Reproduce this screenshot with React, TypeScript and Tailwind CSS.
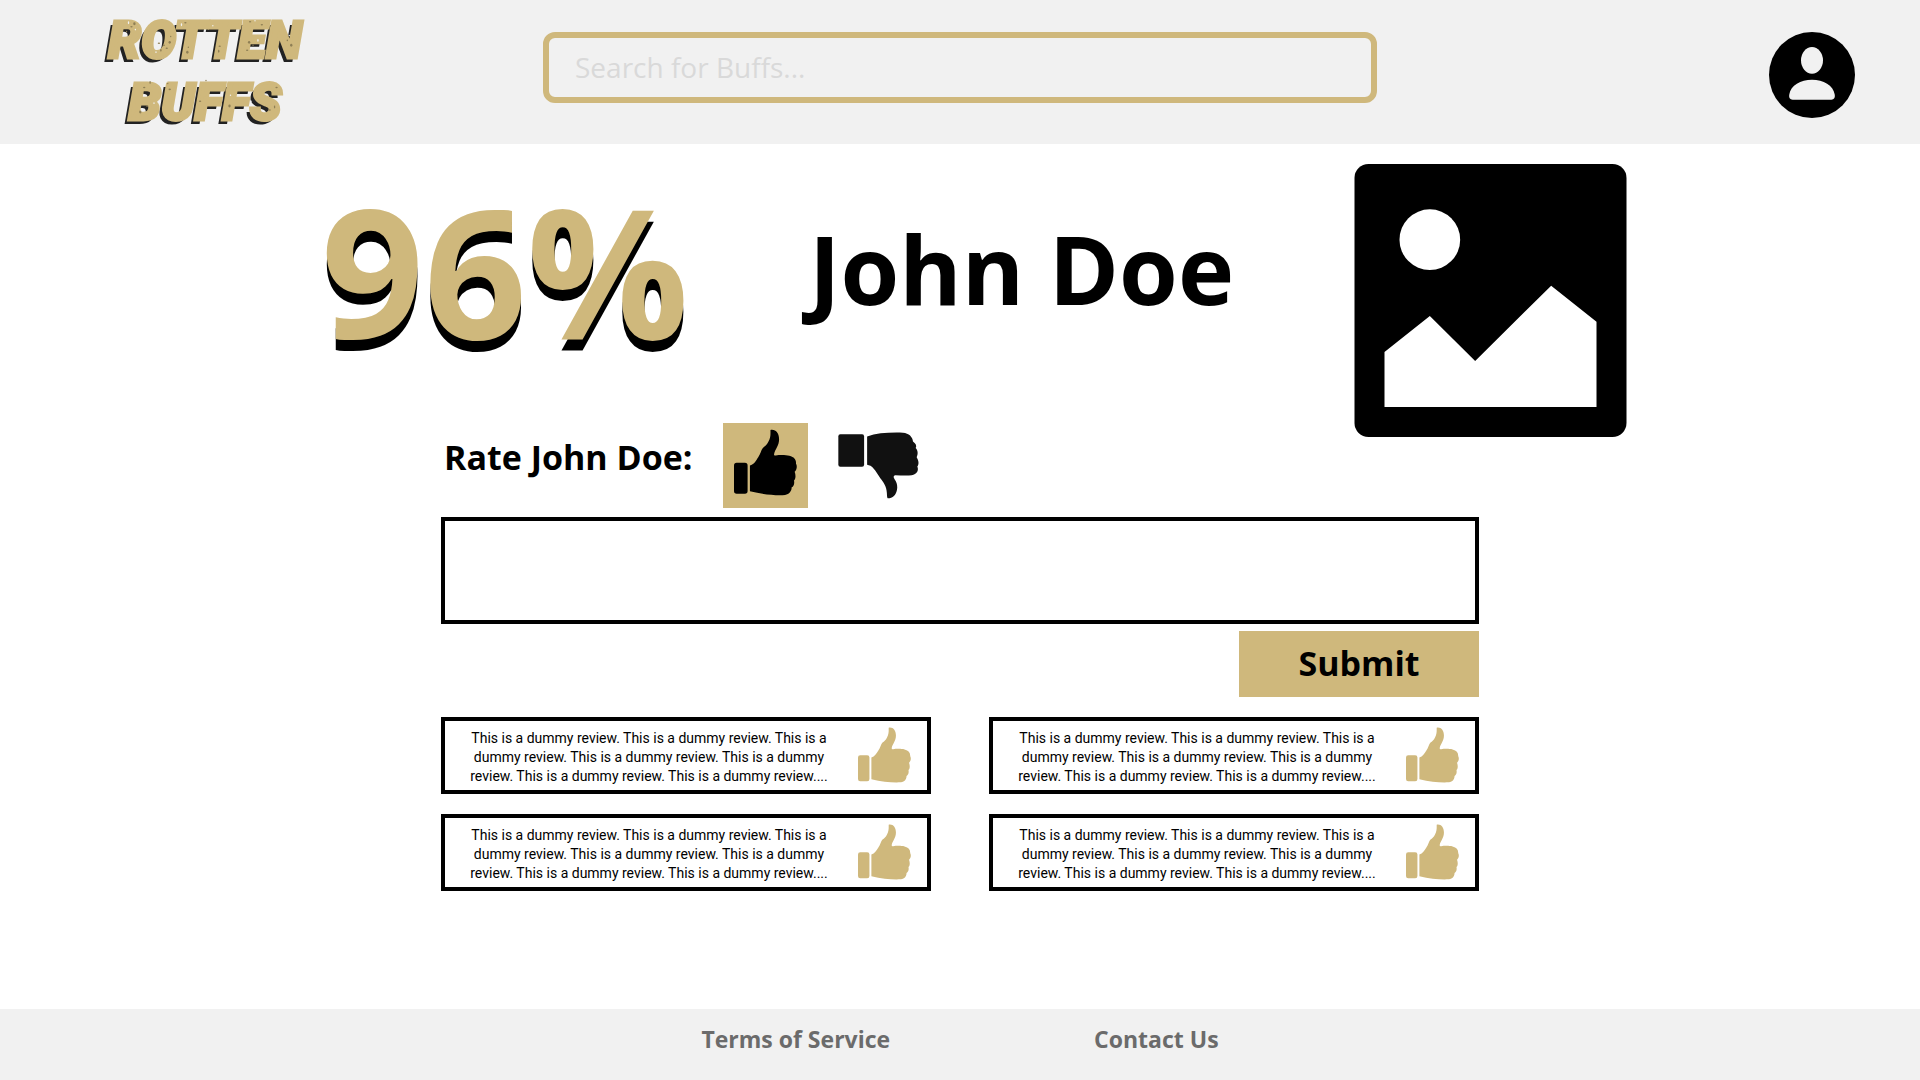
import React from "react";

const REVIEW =
  "This is a dummy review. This is a dummy review. This is a dummy review. This is a dummy review. This is a dummy review. This is a dummy review. This is a dummy review....";

function ThumbUp({ className }: { className: string }) {
  return (
    <svg viewBox="912 58 190 200" className={className} fill="currentColor" aria-hidden="true">
      <rect x="912" y="159" width="41" height="93" rx="8" />
      <path d="M960 167C972 164 978 153 985 142C992 132 993 122 999 114C1006 108 1012 105 1016 95C1023 82 1022 74 1022 60C1038 57 1048 70 1048 88C1048 108 1036 118 1033 132C1032 136 1034 138 1038 137C1050 135 1068 135 1079 138C1094 142 1100 150 1099 162C1103 168 1102 180 1095 186C1099 197 1098 208 1093 212C1095 222 1092 230 1086 233C1086 244 1079 254 1066 256C1036 258 1000 254 960 245Z" />
    </svg>
  );
}

function ThumbDown({ className }: { className: string }) {
  return (
    <svg viewBox="1224 66 242 200" className={className} fill="currentColor" aria-hidden="true">
      <rect x="1225" y="73" width="77" height="97" rx="6" />
      <path d="M1311 79C1340 69 1375 67 1418 68C1436 69 1447 81 1448 94C1457 101 1460 107 1456 114C1464 122 1463 134 1459 141C1466 152 1466 163 1461 169C1466 180 1460 193 1444 195C1428 197 1410 195 1395 195C1389 196 1389 201 1393 207C1399 216 1401 222 1401 232C1400 250 1392 262 1378 264C1370 265 1371 262 1370 248C1369 228 1359 215 1351 205C1341 189 1329 171 1321 167L1311 164Z" />
    </svg>
  );
}

const SPECKS = [
  [24, 10], [27, 14], [22, 19], [30, 11], [31, 17], [60, 33], [57, 38], [63, 36], [52, 40], [66, 30], [67, 24], [55, 31],
  [78, 12], [82, 10], [85, 35], [84, 40], [110, 13], [117, 34], [116, 39], [148, 9], [153, 8], [147, 30], [151, 33], [145, 38],
  [156, 28], [160, 12], [186, 28], [190, 33], [188, 23], [40, 76], [46, 71], [43, 95], [50, 92],
  [36, 101], [64, 72], [66, 78], [63, 70], [97, 90], [103, 69], [127, 95], [128, 84], [168, 99], [173, 96],
  [175, 76], [149, 90],
];

function Logo() {
  return (
    <a
      href="#"
      className="relative flex w-[200px] flex-col items-center font-['Roboto',sans-serif] text-[52px] leading-[62px] font-black text-[#cfb87c] italic [-webkit-text-stroke:3px_#cfb87c] [text-shadow:-4px_4px_0_#222]"
    >
      <span>ROTTEN</span>
      <span>BUFFS</span>
      <svg viewBox="0 0 204 124" className="pointer-events-none absolute inset-0" aria-hidden="true">
        {SPECKS.map(([x, y], i) => (
          <ellipse key={i} cx={x} cy={y + 3} rx={i % 2 ? 1.2 : 0.7} ry={i % 3 ? 0.8 : 1.5} fill={i % 4 ? "#8f7f55" : "#f1f1f1"} />
        ))}
      </svg>
    </a>
  );
}

function Avatar() {
  return (
    <button type="button" aria-label="Account">
      <svg viewBox="0 0 258 258" className="size-[86px]" aria-hidden="true">
        <circle cx="129" cy="129" r="129" fill="#000" />
        <ellipse cx="129" cy="85" rx="33" ry="40" fill="#f1f1f1" />
        <path d="M61 187C65 160 95 143 129 143S193 160 197 187C199 198 195 203 187 203H71C63 203 59 198 61 187Z" fill="#f1f1f1" />
      </svg>
    </button>
  );
}

function Portrait() {
  return (
    <svg viewBox="0 0 816 819" className="size-[273px]" role="img" aria-label="Portrait of John Doe">
      <rect width="816" height="819" rx="42" fill="#000" />
      <circle cx="226" cy="227" r="91" fill="#fff" />
      <path d="M90 564L226 456L362 591L590 365L726 473V729H90Z" fill="#fff" />
    </svg>
  );
}

function Review() {
  return (
    <article className="flex h-[77px] items-center justify-between border-4 border-black pr-4 pl-[14px]">
      <p className="w-[380px] pt-1 text-center font-['Roboto',sans-serif] text-[14px] leading-[19px] text-black">{REVIEW}</p>
      <ThumbUp className="mb-0.5 h-[56px] w-[53px] shrink-0 text-[#cfb87c]" />
    </article>
  );
}

export default function App() {
  return (
    <div className="flex min-h-screen flex-col bg-white font-['Open_Sans',sans-serif] text-black">
      <header className="grid h-36 grid-cols-[1fr_834px_1fr] bg-[#f1f1f1] px-[65px]">
        <div className="flex items-center pl-10">
          <Logo />
        </div>
        <input
          type="search"
          aria-label="Search for Buffs"
          placeholder="Search for Buffs..."
          className="mt-8 h-[71px] w-full rounded-xl border-6 border-[#cfb87c] bg-transparent px-[26px] pb-0.5 text-[28px] outline-none placeholder:text-[#d9d9d9]"
        />
        <div className="mt-8 flex items-start justify-end">
          <Avatar />
        </div>
      </header>

      <main className="flex flex-1 flex-col items-center">
        <section className="mt-5 flex w-full max-w-[1334px] items-start justify-between pl-[28px]">
          <p className="mt-1.5 text-[180px] leading-[200px] font-bold text-[#cfb87c] [text-shadow:0_11px_0_#000]">96%</p>
          <h1 className="mt-14 text-[95px] leading-[97px] font-bold">John Doe</h1>
          <Portrait />
        </section>

        <form className="-mt-[14px] w-full max-w-[1038px]" onSubmit={(e) => e.preventDefault()}>
          <div className="flex h-[85px] items-center">
            <label htmlFor="review" className="w-[282px] pb-4 pl-[3px] text-[34px] font-bold">
              Rate John Doe:
            </label>
            <button type="button" aria-label="Thumbs up" className="flex size-[85px] items-center justify-center bg-[#cfb87c] pb-1.5">
              <ThumbUp className="h-[67px] w-[63px] text-black" />
            </button>
            <button type="button" aria-label="Thumbs down" className="ml-[30px] text-[#111]">
              <ThumbDown className="h-[67px] w-[81px]" />
            </button>
          </div>
          <textarea id="review" className="mt-[9px] block h-[107px] w-full resize-none border-4 border-black bg-white p-4 text-2xl outline-none" />
          <div className="mt-[7px] flex justify-end">
            <button type="submit" className="h-[66px] w-60 bg-[#cfb87c] pb-0.5 text-[34px] font-bold">
              Submit
            </button>
          </div>
        </form>

        <section aria-label="Reviews" className="mt-5 grid w-full max-w-[1038px] grid-cols-2 gap-x-[58px] gap-y-5">
          <Review />
          <Review />
          <Review />
          <Review />
        </section>
      </main>

      <footer className="flex h-[71px] items-start justify-center gap-[204px] bg-[#f1f1f1] pt-3 text-[23px] leading-9 font-bold text-[#6b6b6b]">
        <a href="#">Terms of Service</a>
        <a href="#">Contact Us</a>
      </footer>
    </div>
  );
}
